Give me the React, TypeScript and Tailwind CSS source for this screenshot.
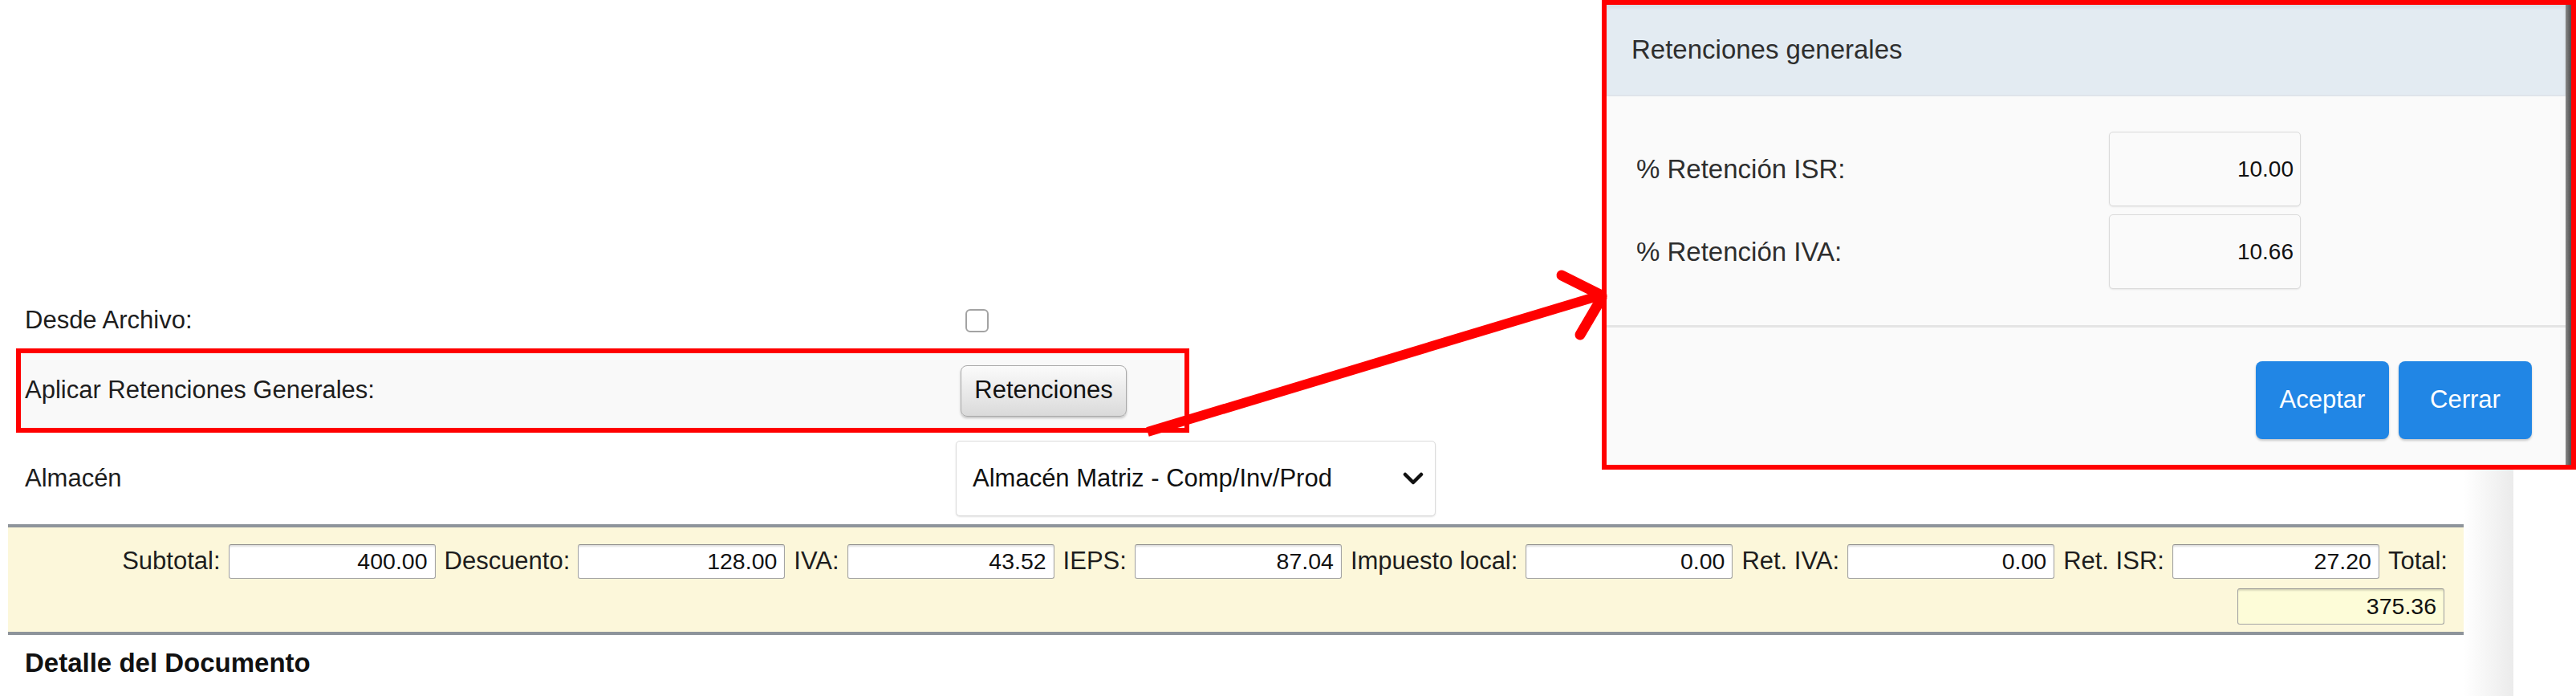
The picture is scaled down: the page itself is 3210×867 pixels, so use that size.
import React from "react";

const fields: { label: string; value: string }[] = [
  { label: "Subtotal:", value: "400.00" },
  { label: "Descuento:", value: "128.00" },
  { label: "IVA:", value: "43.52" },
  { label: "IEPS:", value: "87.04" },
  { label: "Impuesto local:", value: "0.00" },
  { label: "Ret. IVA:", value: "0.00" },
  { label: "Ret. ISR:", value: "27.20" },
];

function NumBox({ value, yellow }: { value: string; yellow?: boolean }) {
  return (
    <input
      readOnly
      defaultValue={value}
      className={
        "w-[258px] rounded-[3px] border border-[#a4a4a4] border-t-[#8a8a8a] pr-[9px] text-right text-[28.5px] text-[#111] outline-none shadow-[inset_0_2px_2px_rgba(0,0,0,0.12)] " +
        (yellow ? "h-[45px] bg-[#fdfcd8]" : "h-[43px] bg-white")
      }
    />
  );
}

export default function App() {
  return (
    <div className="relative h-[867px] w-[3210px] overflow-hidden bg-white font-['Liberation_Sans',Arial,sans-serif] text-[#1d1d1d]">
      <div className="flex h-full">
        {/* main page */}
        <div className="w-[3070px] shrink-0">
          <div className="pt-[364px]">
            <div className="ml-[20px] w-[1462px]">
              {/* Row 1 */}
              <div className="flex h-[70px] items-center">
                <div className="w-[1171px] shrink-0 pl-[11px] text-[31px]">Desde Archivo:</div>
                <div className="ml-[12px] h-[29px] w-[29px] rounded-[6px] border-2 border-[#a3a3a3] bg-white" />
              </div>
              {/* Row 2 */}
              <div className="flex h-[105px] items-center border-[6px] border-[#ff0000] bg-[#f9f9f9]">
                <div className="w-[1165px] shrink-0 pl-[5px] text-[31px]">Aplicar Retenciones Generales:</div>
                <button className="ml-[6px] flex h-[64px] w-[207px] items-center justify-center rounded-[8px] border border-[#a9a9a9] bg-gradient-to-b from-[#fbfbfb] to-[#dadada] text-[31px] text-[#111] shadow-[0_2px_3px_rgba(0,0,0,0.22)]">
                  Retenciones
                </button>
              </div>
              {/* Row 3 */}
              <div className="flex h-[114px] items-center">
                <div className="w-[1171px] shrink-0 pl-[11px] text-[31px]">Almacén</div>
                <div className="flex h-[94px] w-[598px] shrink-0 items-center justify-between rounded-[5px] border border-[#dcdcdc] bg-white pl-[20px] pr-[14px] text-[31px] text-[#111] shadow-[0_1px_2px_rgba(0,0,0,0.12)]">
                  <span>Almacén Matriz - Comp/Inv/Prod</span>
                  <svg width="26" height="17" viewBox="0 0 26 17">
                    <polyline points="3,3 13,13 23,3" fill="none" stroke="#111" strokeWidth="4.5" strokeLinecap="round" strokeLinejoin="round" />
                  </svg>
                </div>
              </div>
            </div>

            {/* Totals bar */}
            <div className="ml-[10px] w-[3087px] border-y-[4px] border-[#8e949b] bg-[#fcf7da] pb-[9px] pr-[47px] pt-[19px]">
              <div className="flex flex-col items-end gap-[10px]">
                <div className="flex items-center text-[31px]">
                  {fields.map((f, i) => (
                    <div key={f.label} className={"flex items-center " + (i > 0 ? "ml-[11px]" : "")}>
                      <span>{f.label}</span>
                      <span className="ml-[10px]">
                        <NumBox value={f.value} />
                      </span>
                    </div>
                  ))}
                  <span className="ml-[11px]">Total:</span>
                </div>
                <div className="mr-[4px]">
                  <NumBox value="375.36" yellow />
                </div>
              </div>
            </div>

            <div className="ml-[31px] mt-[10px] text-[33px] font-bold text-[#111]">Detalle del Documento</div>
          </div>
        </div>
        {/* side shadow */}
        <div className="w-[62px] shrink-0 bg-gradient-to-r from-white to-[#ebebeb]" />
        <div className="flex-1 bg-white" />
      </div>

      {/* Dialog (annotated) */}
      <div className="absolute right-0 top-0 flex h-[585px] w-[1214px] border-[6px] border-[#ff0000] bg-[#fafafa]">
        <div className="flex flex-1 flex-col">
          <div className="flex h-[114px] items-center border-b-2 border-[#dfe4ea] bg-[#e3ebf2] pl-[31px] text-[33px] text-[#2e2e2e] shadow-[inset_0_4px_4px_rgba(0,0,0,0.06)]">
            Retenciones generales
          </div>
          <div className="flex h-[285px] flex-col gap-[10px] pt-[44px]">
            {[
              { l: "% Retención ISR:", v: "10.00" },
              { l: "% Retención IVA:", v: "10.66" },
            ].map((r) => (
              <div key={r.l} className="flex items-center">
                <div className="w-[626px] shrink-0 pl-[37px] text-[33px] text-[#2e2e2e]">{r.l}</div>
                <div className="flex h-[93px] w-[239px] items-center justify-end rounded-[5px] border border-[#dadada] bg-[#fafafa] pr-[8px] text-[28px] text-[#111] shadow-[0_1px_2px_rgba(0,0,0,0.08)]">
                  {r.v}
                </div>
              </div>
            ))}
          </div>
          <div className="flex flex-1 justify-end gap-[12px] border-t-[3px] border-[#e4e4e4] pr-[42px] pt-[42px]">
            <button className="h-[97px] w-[166px] rounded-[8px] bg-[#2186e5] text-[31px] text-white shadow-[0_2px_3px_rgba(0,0,0,0.2)]">
              Aceptar
            </button>
            <button className="h-[97px] w-[166px] rounded-[8px] bg-[#2186e5] text-[31px] text-white shadow-[0_2px_3px_rgba(0,0,0,0.2)]">
              Cerrar
            </button>
          </div>
        </div>
        <div className="w-[7px] shrink-0 bg-gradient-to-r from-[#888] to-[#4f4f4f]" />
      </div>

      {/* Arrow annotation */}
      <svg className="pointer-events-none absolute left-0 top-0" width="3210" height="867" viewBox="0 0 3210 867">
        <line x1="1430" y1="538" x2="1994" y2="368" stroke="#ff0000" strokeWidth="12" />
        <line x1="1946" y1="343" x2="1996" y2="368" stroke="#ff0000" strokeWidth="13" strokeLinecap="round" />
        <line x1="1969" y1="417" x2="1996" y2="371" stroke="#ff0000" strokeWidth="13" strokeLinecap="round" />
      </svg>
    </div>
  );
}
